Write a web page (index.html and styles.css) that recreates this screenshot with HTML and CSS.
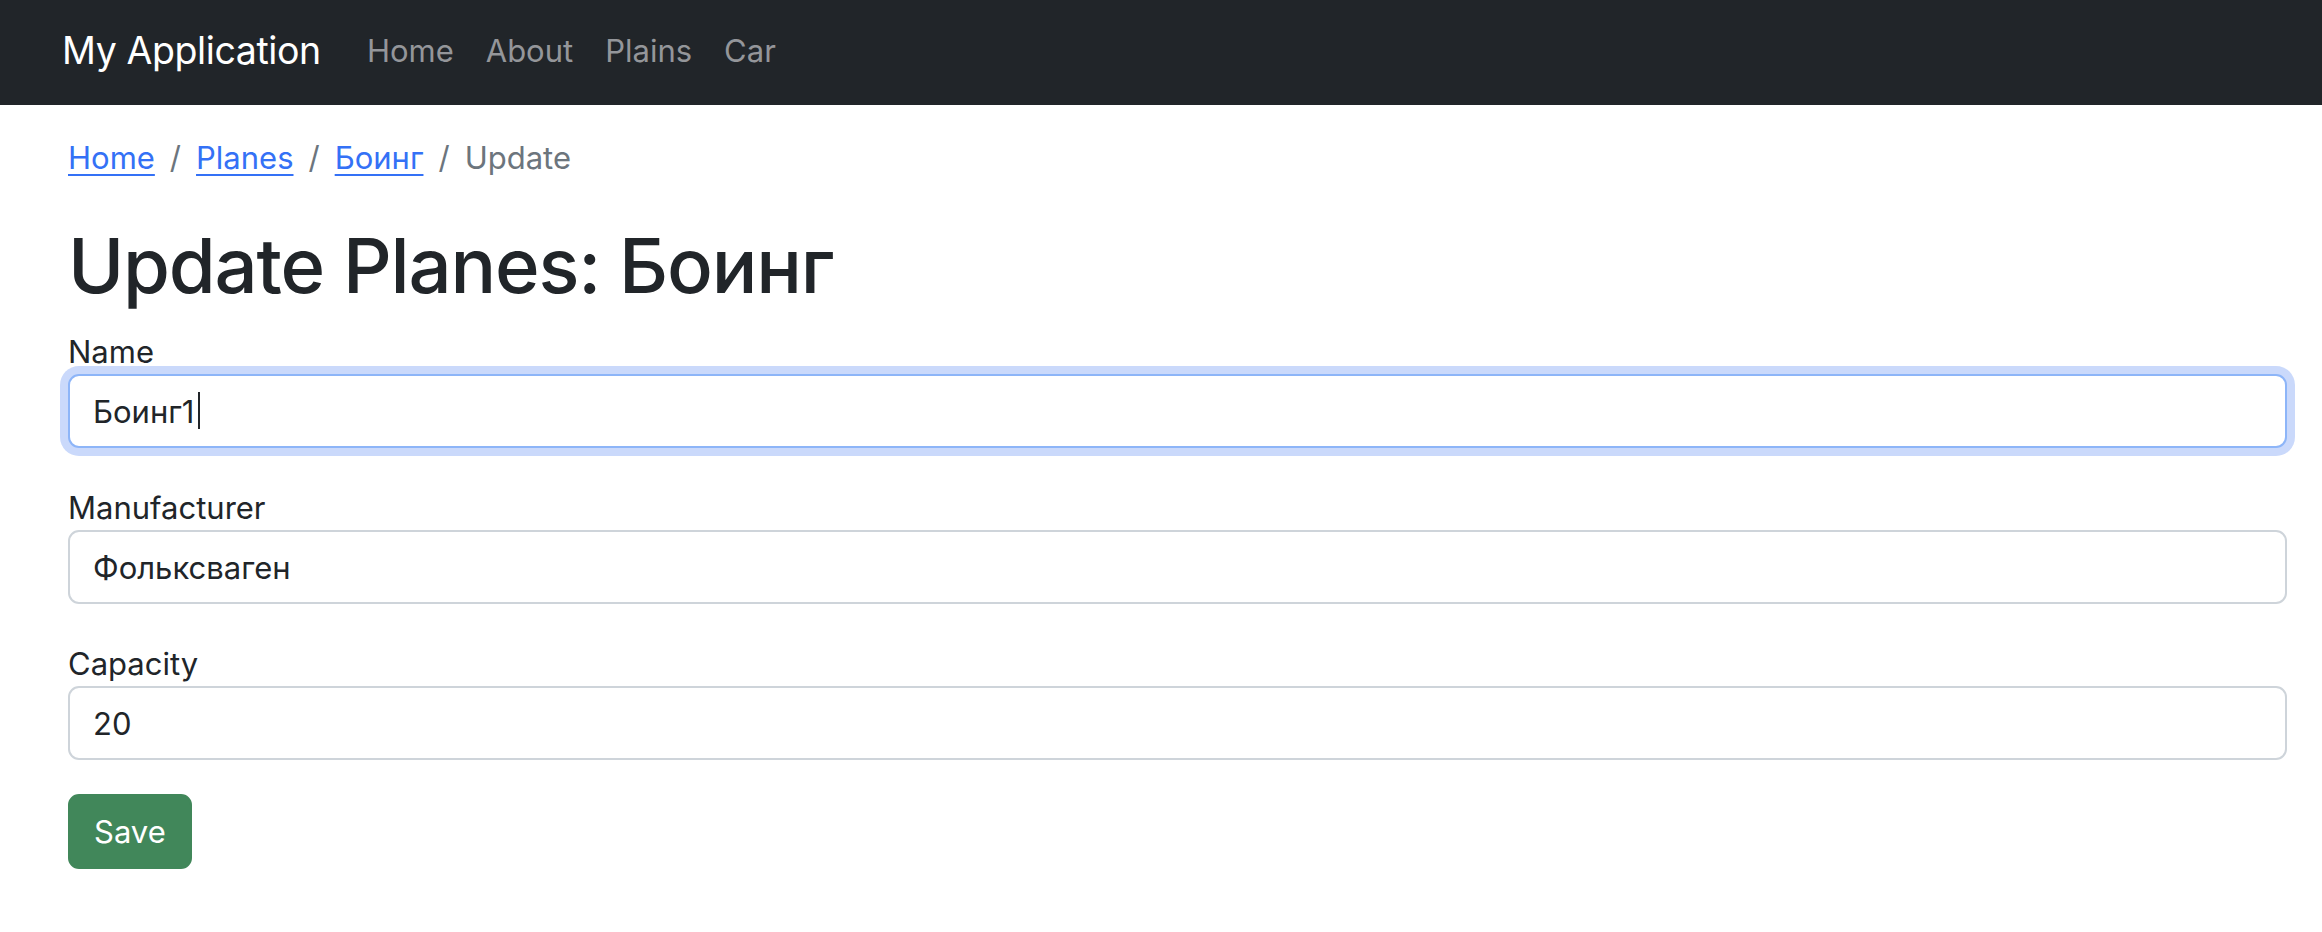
FILE: index.html
```html
<!DOCTYPE html>
<html lang="ru">
<head>
<meta charset="utf-8">
<title>Update Planes</title>
<link rel="stylesheet" href="styles.css">
</head>
<body>
<nav class="navbar">
  <a class="brand" href="#">My Application</a>
  <ul class="nav">
    <li><a class="nav-link" href="#">Home</a></li>
    <li><a class="nav-link" href="#">About</a></li>
    <li><a class="nav-link" href="#">Plains</a></li>
    <li><a class="nav-link" href="#">Car</a></li>
  </ul>
</nav>
<main class="container">
  <ol class="breadcrumb">
    <li><a href="#">Home</a></li>
    <li class="sep">/</li>
    <li><a href="#">Planes</a></li>
    <li class="sep">/</li>
    <li><a href="#">Боинг</a></li>
    <li class="sep">/</li>
    <li class="active">Update</li>
  </ol>
  <h1 class="title">Update Planes: Боинг</h1>
  <form class="form">
    <div class="field">
      <label class="label" for="name">Name</label>
      <div class="control-wrap">
        <input class="control focused" id="name" type="text" value="Боинг1">
        <span class="caret"></span>
      </div>
    </div>
    <div class="field">
      <label class="label" for="manufacturer">Manufacturer</label>
      <div class="control-wrap">
        <input class="control" id="manufacturer" type="text" value="Фольксваген">
      </div>
    </div>
    <div class="field last">
      <label class="label" for="capacity">Capacity</label>
      <div class="control-wrap">
        <input class="control" id="capacity" type="text" value="20">
      </div>
    </div>
    <button class="btn-save" type="button">Save</button>
  </form>
</main>
</body>
</html>
```
FILE: styles.css
```css
* { box-sizing: border-box; }
html, body {
  margin: 0;
  padding: 0;
  background: #ffffff;
}
body {
  font-family: Inter, "Noto Sans", "Liberation Sans", sans-serif;
  color: #212529;
  font-size: 31px;
  line-height: 45px;
}
.navbar {
  height: 105px;
  background: #212529;
  display: flex;
  align-items: center;
  padding: 0 0 4px 62px;
}
.brand {
  font-size: 37.5px;
  line-height: 56px;
  color: #ffffff;
  text-decoration: none;
  margin-right: 30px;
  letter-spacing: -0.4px;
}
.nav {
  list-style: none;
  margin: 0;
  padding: 0;
  display: flex;
}
.nav-link {
  display: block;
  padding: 0 16px;
  font-size: 31px;
  color: #94969a;
  text-decoration: none;
}
.container {
  padding: 0 35px 0 68px;
}
.breadcrumb {
  list-style: none;
  margin: 30px 0 0 0;
  padding: 0;
  display: flex;
  font-size: 31px;
  line-height: 45px;
}
.breadcrumb a {
  color: #3471f6;
  text-decoration: underline;
  text-underline-offset: 5px;
  text-decoration-thickness: 2px;
}
.breadcrumb .sep {
  color: #6c757d;
  padding: 0 15px;
}
.breadcrumb .active {
  color: #6c757d;
}
.title {
  font-size: 76px;
  font-weight: 500;
  line-height: 90px;
  margin: 40px 0 19px 0;
  letter-spacing: -1.2px;
}
.form {
  margin: 0;
}
.field {
  margin-bottom: 37px;
}
.field.last {
  margin-bottom: 34px;
}
.label {
  display: block;
  font-size: 31px;
  line-height: 45px;
}
.control-wrap {
  position: relative;
}
.control {
  display: block;
  width: 100%;
  height: 74px;
  padding: 0 23px;
  font-family: inherit;
  font-size: 31px;
  color: #212529;
  background: #ffffff;
  border: 2px solid #ced4da;
  border-radius: 11px;
  outline: none;
}
.control.focused {
  border-color: #8db5f8;
  box-shadow: 0 0 0 8px #cad9fb;
}
.caret {
  position: absolute;
  left: 130px;
  top: 18px;
  width: 2px;
  height: 37px;
  background: #212529;
}
.btn-save {
  display: block;
  height: 75px;
  padding: 0 24px;
  font-family: inherit;
  font-size: 31px;
  color: #ffffff;
  background: #41875a;
  border: 2px solid #41875a;
  border-radius: 11px;
}
```
